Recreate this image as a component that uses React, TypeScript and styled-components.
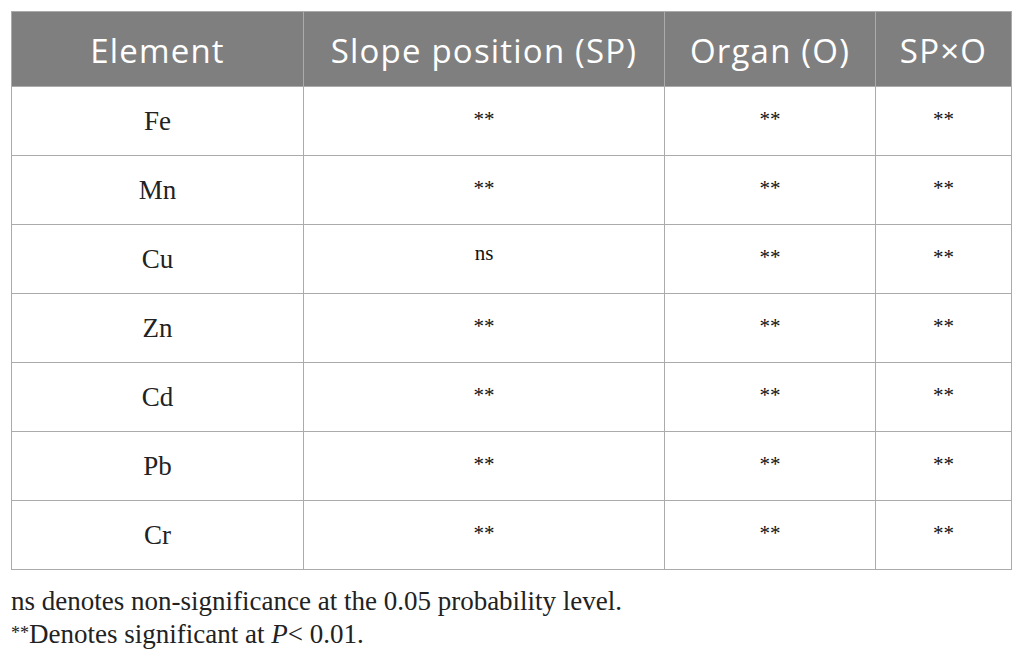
import React from "react";
import styled, { createGlobalStyle } from "styled-components";

const GlobalStyle = createGlobalStyle`
  body {
    margin: 0;
    background: #ffffff;
  }
`;

const Page = styled.div`
  padding: 11px 15px 0 11px;
`;

const Table = styled.table`
  width: 1000px;
  border-collapse: collapse;
  table-layout: fixed;
`;

const HeadCell = styled.th`
  height: 71px;
  padding: 3px 0 0;
  background: #7f7f7f;
  color: #ffffff;
  font-family: "Open Sans", "Noto Sans", sans-serif;
  font-size: 33px;
  letter-spacing: 1.2px;
  font-weight: 400;
  text-align: center;
  border: 1px solid #ababab;
  white-space: nowrap;
`;

const Cell = styled.td`
  height: 68px;
  padding: 0;
  border: 1px solid #ababab;
  text-align: center;
  font-family: "Liberation Serif", serif;
  font-size: 27px;
  color: #222222;
`;

const Mark = styled.span<{ $raise: number }>`
  font-family: "Liberation Serif", serif;
  font-size: 21px;
  color: #111111;
  vertical-align: ${({ $raise }) => $raise}px;
  line-height: 0;
`;

const Notes = styled.div`
  margin-top: 15px;
  font-family: "Liberation Serif", serif;
  font-size: 27px;
  line-height: 33px;
  color: #222222;
`;

const Star = styled.span`
  font-size: 18px;
  vertical-align: 4px;
  line-height: 0;
`;

const columns = [
  { label: "Element", width: 292 },
  { label: "Slope position (SP)", width: 361 },
  { label: "Organ (O)", width: 211 },
  { label: "SP×O", width: 136 },
];

const rows: [string, string, string, string][] = [
  ["Fe", "**", "**", "**"],
  ["Mn", "**", "**", "**"],
  ["Cu", "ns", "**", "**"],
  ["Zn", "**", "**", "**"],
  ["Cd", "**", "**", "**"],
  ["Pb", "**", "**", "**"],
  ["Cr", "**", "**", "**"],
];

const MarkCell: React.FC<{ value: string }> = ({ value }) => (
  <Cell>
    <Mark $raise={value === "ns" ? 8 : 4}>{value}</Mark>
  </Cell>
);

export default function App() {
  return (
    <>
      <GlobalStyle />
      <Page>
        <Table>
          <colgroup>
            {columns.map((c) => (
              <col key={c.label} style={{ width: c.width }} />
            ))}
          </colgroup>
          <thead>
            <tr>
              {columns.map((c) => (
                <HeadCell key={c.label}>{c.label}</HeadCell>
              ))}
            </tr>
          </thead>
          <tbody>
            {rows.map(([el, sp, o, spo]) => (
              <tr key={el}>
                <Cell>{el}</Cell>
                <MarkCell value={sp} />
                <MarkCell value={o} />
                <MarkCell value={spo} />
              </tr>
            ))}
          </tbody>
        </Table>
        <Notes>
          <div>ns denotes non-significance at the 0.05 probability level.</div>
          <div>
            <Star>**</Star>Denotes significant at <i>P</i>&lt; 0.01.
          </div>
        </Notes>
      </Page>
    </>
  );
}
